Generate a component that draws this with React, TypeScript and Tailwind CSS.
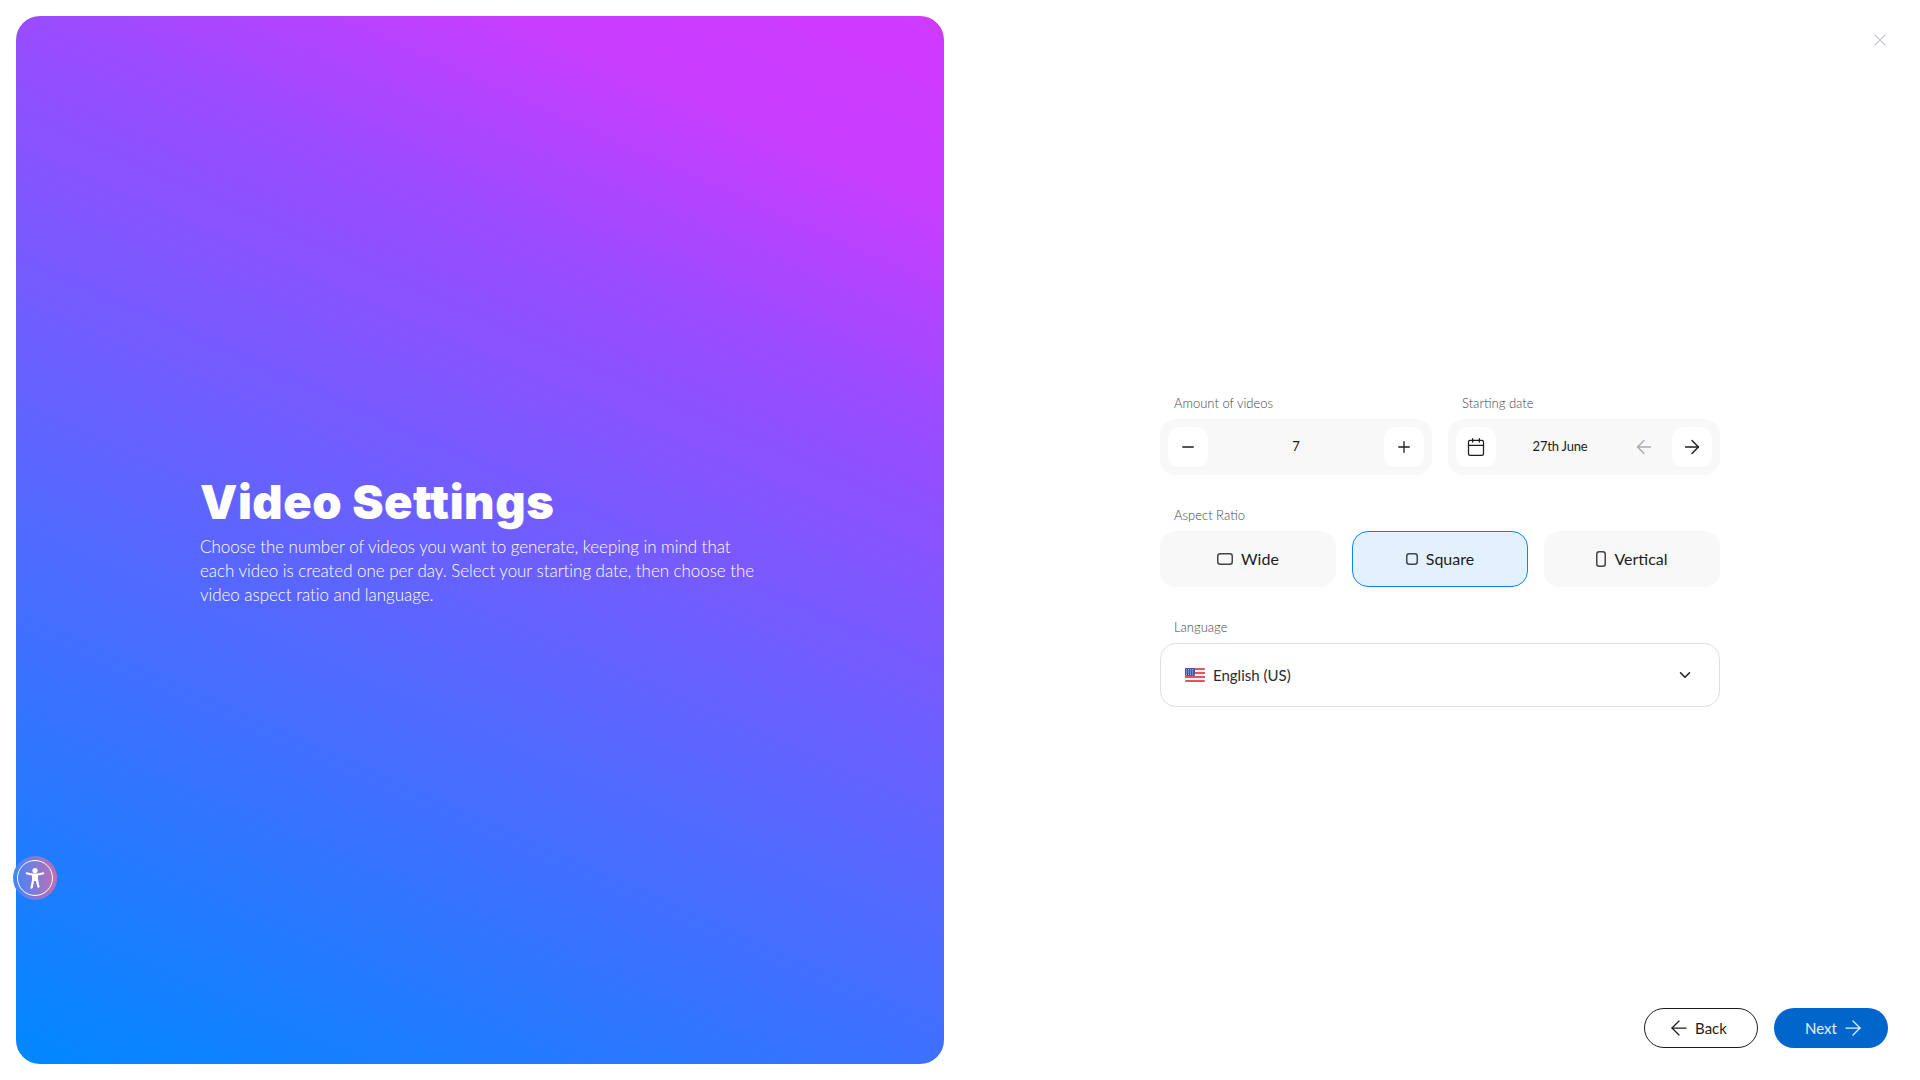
import { ArrowLeft, ArrowRight, Calendar, ChevronDown, Minus, Plus, X } from "lucide-react";

function Label({ children }: { children: React.ReactNode }) {
  return <div className="mb-2 h-4 pl-[14px] text-[13px] leading-4 font-light text-[#44444a]">{children}</div>;
}

function SquareBtn({ children }: { children: React.ReactNode }) {
  return (
    <button className="flex h-10 w-10 shrink-0 items-center justify-center rounded-xl bg-white text-[#1c1c20]">
      {children}
    </button>
  );
}

function UsFlag() {
  return (
    <svg width="20" height="14" viewBox="0 0 20 14" className="shrink-0">
      <rect width="20" height="14" rx="1.5" fill="#f4f4f6" />
      <rect y="0" width="20" height="2" rx="1" fill="#e0555f" />
      <rect y="4" width="20" height="2" fill="#e0555f" />
      <rect y="8" width="20" height="2" fill="#e0555f" />
      <rect y="12" width="20" height="2" rx="1" fill="#e0555f" />
      <rect width="10" height="8" rx="1" fill="#4a56a8" />
      <path d="M1 1.5h8M1 3.2h8M1 4.9h8M1 6.6h8" stroke="#c8cdea" strokeWidth="0.7" strokeDasharray="1 1" />
    </svg>
  );
}

function RatioOption({ label, w, h, active }: { label: string; w: number; h: number; active?: boolean }) {
  return (
    <button
      className={
        active
          ? "flex h-14 items-center justify-center gap-2 rounded-2xl border border-[#0a84ff] bg-[#e3f1ff] text-[#1c1c20]"
          : "flex h-14 items-center justify-center gap-2 rounded-2xl bg-[#f8f8f8] text-[#1c1c20]"
      }
    >
      <svg width={w} height={h} viewBox={`0 0 ${w} ${h}`}>
        <rect x="0.75" y="0.75" width={w - 1.5} height={h - 1.5} rx="2.5" fill="none" stroke="#44444a" strokeWidth="1.5" />
      </svg>
      <span className="text-base">{label}</span>
    </button>
  );
}

export default function App() {
  return (
    <div className="flex h-screen w-full overflow-hidden bg-white font-[Lato,sans-serif]">
      <div className="w-[960px] shrink-0 p-4">
        <div className="flex h-full w-full flex-col justify-center rounded-3xl bg-[linear-gradient(24deg,#0088ff_0%,#6c5fff_50%,#9a4cff_72%,#c83dff_87%,#cf3aff_100%)] px-[184px] text-white">
          <h1 className="font-[Inter,sans-serif] text-[47px] leading-[56px] font-black tracking-[0.55px]">Video Settings</h1>
          <p className="mt-[5px] text-[17px] leading-6 font-light tracking-[-0.05px]">
            Choose the number of videos you want to generate, keeping in mind that each video is created one per day.
            Select your starting date, then choose the video aspect ratio and language.
          </p>
        </div>
      </div>

      <div className="flex flex-1 flex-col">
        <div className="flex h-[94px] shrink-0 justify-end pt-[30px] pr-[30px]">
          <X size={20} strokeWidth={1.25} className="text-[#b8bccb]" />
        </div>

        <div className="flex flex-1 items-center justify-center">
          <div className="w-[560px]">
            <div className="grid grid-cols-2 gap-4">
              <div>
                <Label>Amount of videos</Label>
                <div className="flex h-14 items-center justify-between rounded-2xl bg-[#f8f8f8] p-2">
                  <SquareBtn><Minus size={18} strokeWidth={1.75} /></SquareBtn>
                  <span className="text-[13px] text-[#1c1c20]">7</span>
                  <SquareBtn><Plus size={18} strokeWidth={1.75} /></SquareBtn>
                </div>
              </div>
              <div>
                <Label>Starting date</Label>
                <div className="flex h-14 items-center rounded-2xl bg-[#f8f8f8] p-2">
                  <SquareBtn><Calendar size={20} strokeWidth={1.5} /></SquareBtn>
                  <span className="flex-1 text-center text-[13px] tracking-[-0.2px] text-[#1c1c20]">27th June</span>
                  <div className="flex h-10 w-10 items-center justify-center text-[#a9abb3]">
                    <ArrowLeft size={22} strokeWidth={1.5} />
                  </div>
                  <div className="ml-2">
                    <SquareBtn><ArrowRight size={22} strokeWidth={1.5} /></SquareBtn>
                  </div>
                </div>
              </div>
            </div>

            <div className="mt-8">
              <Label>Aspect Ratio</Label>
              <div className="grid grid-cols-3 gap-4">
                <RatioOption label="Wide" w={16} h={12} />
                <RatioOption label="Square" w={12} h={12} active />
                <RatioOption label="Vertical" w={10} h={16} />
              </div>
            </div>

            <div className="mt-8">
              <Label>Language</Label>
              <div className="flex h-16 items-center rounded-2xl border border-[#dfdfe6] bg-white pr-[25px] pl-6">
                <UsFlag />
                <span className="ml-2 flex-1 text-[15px] text-[#2a2a30]">English (US)</span>
                <ChevronDown size={18} className="text-[#1c1c20]" />
              </div>
            </div>
          </div>
        </div>

        <div className="flex shrink-0 justify-end gap-4 pr-8 pb-8">
          <button className="flex h-10 w-[114px] items-center justify-center gap-1 rounded-full border border-[#1c1c20] pr-2 text-[15px] text-[#1c1c20]">
            <ArrowLeft size={24} strokeWidth={1.25} />
            Back
          </button>
          <button className="flex h-10 w-[114px] items-center justify-center gap-1 rounded-full bg-[#0066cc] pl-2 text-[15px] text-white/90">
            Next
            <ArrowRight size={24} strokeWidth={1.25} />
          </button>
        </div>
      </div>

      <div className="absolute top-[856px] left-[13px] flex h-11 w-11 items-center justify-center rounded-full bg-[linear-gradient(90deg,#3e86ff,#c46fae)]">
        <div className="flex h-9 w-9 items-center justify-center rounded-full border border-white">
          <svg width="22" height="24" viewBox="0 0 22 24" fill="white">
            <circle cx="11" cy="4.5" r="2.6" />
            <path d="M2.4 8.2c-.6-.2-.9-.8-.7-1.3.2-.5.8-.8 1.3-.6 2.6.8 5.2 1.2 8 1.2s5.4-.4 8-1.2c.5-.2 1.1.1 1.3.6.2.5-.1 1.1-.7 1.3-1.9.6-3.8 1-5.6 1.2v3.6l1.5 7.4c.1.6-.3 1.2-.9 1.3-.6.1-1.1-.3-1.3-.9L11.9 15h-1.8l-1.4 6.8c-.2.6-.7 1-1.3.9-.6-.1-1-.7-.9-1.3l1.5-7.4V9.4c-1.8-.2-3.7-.6-5.6-1.2z" />
          </svg>
        </div>
      </div>
    </div>
  );
}
